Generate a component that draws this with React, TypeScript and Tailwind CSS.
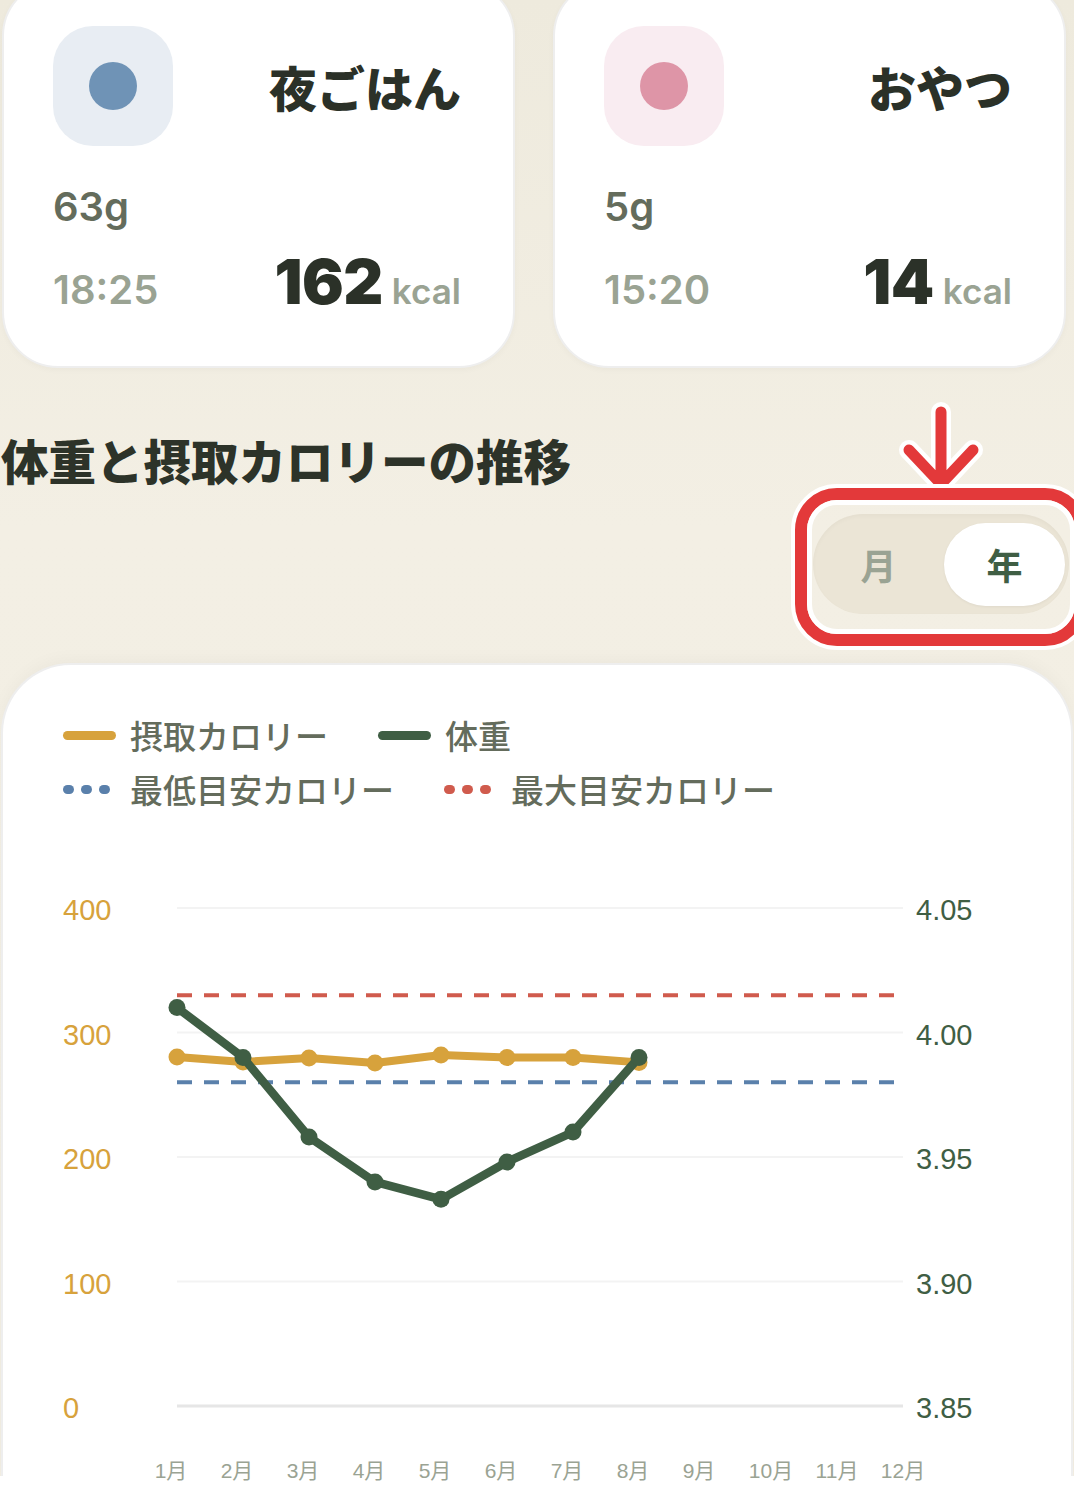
import React from "react";

const jp = "font-['Noto_Sans_CJK_JP',sans-serif]";
const num = "font-['Inter','Noto_Sans_CJK_JP',sans-serif]";

type Meal = {
  title: string;
  grams: string;
  time: string;
  kcal: string;
  tint: string;
  dot: string;
};

const meals: Meal[] = [
  { title: "夜ごはん", grams: "63g", time: "18:25", kcal: "162", tint: "bg-[#e8edf3]", dot: "bg-[#6f93b6]" },
  { title: "おやつ", grams: "5g", time: "15:20", kcal: "14", tint: "bg-[#f9ecf1]", dot: "bg-[#de95a7]" },
];

// chart data (year view)
const months = ["1月", "2月", "3月", "4月", "5月", "6月", "7月", "8月", "9月", "10月", "11月", "12月"];
const calories = [280.3, 276.3, 279.5, 275.5, 282, 280, 280, 276];
const weights = [4.01, 3.99, 3.958, 3.94, 3.933, 3.948, 3.96, 3.99];
const minKcal = 260;
const maxKcal = 330;

const X0 = 177;
const STEP = 66;
const Y0 = 1406;
const PER100 = 124.5;
const xAt = (i: number) => X0 + i * STEP;
const yKcal = (v: number) => Y0 - (v / 100) * PER100;
const yWeight = (w: number) => Y0 - ((w - 3.85) / 0.05) * PER100;

function MealCard({ meal }: { meal: Meal }) {
  return (
    <div className="h-[388px] w-[513px] rounded-[56px] border-2 border-[#eeeeee] bg-white pl-[49px] pr-[52px] pt-[44px] shadow-[0_2px_6px_rgba(0,0,0,0.03)]">
      <div className="flex items-center justify-between">
        <div className={`flex h-[120px] w-[120px] items-center justify-center rounded-[40px] ${meal.tint}`}>
          <div className={`h-[48px] w-[48px] rounded-full ${meal.dot}`} />
        </div>
        <div className={`${jp} text-[48px] font-black leading-[48px] text-[#2b3128]`}>{meal.title}</div>
      </div>
      <div className={`${num} mt-[41px] text-[40px] font-semibold leading-[40px] text-[#646c5c]`}>{meal.grams}</div>
      <div className="mt-[25px] flex items-baseline justify-between">
        <span className={`${num} text-[40px] font-semibold leading-[40px] text-[#9aa393]`}>{meal.time}</span>
        <span className="flex items-baseline gap-[9px]">
          <span className={`${num} text-[62px] font-black leading-[60px] tracking-[-0.5px] text-[#2b3128]`}>{meal.kcal}</span>
          <span className={`${num} text-[35px] font-semibold leading-[40px] text-[#9aa393]`}>kcal</span>
        </span>
      </div>
    </div>
  );
}

function LegendLine({ color, label }: { color: string; label: string }) {
  return (
    <div className="flex items-center gap-[14px]">
      <span className={`h-[9px] w-[53px] rounded-full ${color}`} />
      <span className={`${jp} text-[33px] font-medium leading-[54px] text-[#646c5c]`}>{label}</span>
    </div>
  );
}

function LegendDots({ color, label }: { color: string; label: string }) {
  return (
    <div className="flex items-center gap-[20px]">
      <span className="flex gap-[7px]">
        <span className={`h-[9px] w-[11px] rounded-full ${color}`} />
        <span className={`h-[9px] w-[11px] rounded-full ${color}`} />
        <span className={`h-[9px] w-[11px] rounded-full ${color}`} />
      </span>
      <span className={`${jp} text-[33px] font-medium leading-[54px] text-[#646c5c]`}>{label}</span>
    </div>
  );
}

function Chart() {
  const grid = [0, 100, 200, 300, 400];
  const right = ["3.85", "3.90", "3.95", "4.00", "4.05"];
  const kcalPts = calories.map((v, i) => `${xAt(i)},${yKcal(v)}`).join(" ");
  const wPts = weights.map((w, i) => `${xAt(i)},${yWeight(w)}`).join(" ");
  const labelFont = "'Liberation Sans','Noto Sans CJK JP',sans-serif";

  return (
    <svg width={1068} height={620} viewBox="3 880 1068 620" className="relative z-10 mt-[64px] block">
      {grid.map((g) => (
        <line
          key={g}
          x1={X0}
          x2={903}
          y1={yKcal(g)}
          y2={yKcal(g)}
          stroke={g === 0 ? "#e6e6e6" : "#f3f3f3"}
          strokeWidth={g === 0 ? 3 : 2}
        />
      ))}
      {grid.map((g) => (
        <text key={`l${g}`} x={63} y={yKcal(g) + 12} fontSize={29} fill="#d7a23c" fontFamily={labelFont}>
          {g}
        </text>
      ))}
      {right.map((r, i) => (
        <text key={r} x={916} y={Y0 - i * PER100 + 12} fontSize={29} fill="#3f5e44" fontFamily={labelFont}>
          {r}
        </text>
      ))}

      <line x1={X0} x2={895} y1={yKcal(maxKcal)} y2={yKcal(maxKcal)} stroke="#d05b4d" strokeWidth={4} strokeDasharray="15 12" />
      <line x1={X0} x2={895} y1={yKcal(minKcal)} y2={yKcal(minKcal)} stroke="#5a80ab" strokeWidth={4} strokeDasharray="15 12" />

      <polyline points={kcalPts} fill="none" stroke="#d7a23c" strokeWidth={8} strokeLinejoin="round" />
      {calories.map((v, i) => (
        <circle key={`c${i}`} cx={xAt(i)} cy={yKcal(v)} r={8.5} fill="#d7a23c" />
      ))}
      <polyline points={wPts} fill="none" stroke="#3f5e44" strokeWidth={8.5} strokeLinejoin="round" />
      {weights.map((w, i) => (
        <circle key={`w${i}`} cx={xAt(i)} cy={yWeight(w)} r={8.5} fill="#3f5e44" />
      ))}

      {months.map((m, i) => (
        <text
          key={m}
          x={xAt(i) - (m.length === 2 ? 6 : 0)}
          y={1478}
          fontSize={21}
          fill="#9aa393"
          textAnchor="middle"
          fontFamily={labelFont}
        >
          {m}
        </text>
      ))}
    </svg>
  );
}

function Annotation() {
  return (
    <>
      <svg width={100} height={100} viewBox="890 400 100 100" className="absolute left-[890px] top-[400px]">
        <path d="M941 412 V484 M909 450 L941 484 L973 450" fill="none" stroke="#ffffff" strokeWidth={20} strokeLinecap="round" strokeLinejoin="round" />
        <path d="M941 412 V484 M909 450 L941 484 L973 450" fill="none" stroke="#e3393a" strokeWidth={11} strokeLinecap="round" strokeLinejoin="round" />
      </svg>
      <div className="absolute left-[791px] top-[484px] h-[166px] w-[300px] rounded-[46px] border-[4px] border-white">
        <div className="h-full w-full rounded-[42px] border-[12px] border-[#e3393a]">
          <div className="h-full w-full rounded-[30px] border-[5px] border-white" />
        </div>
      </div>
    </>
  );
}

export default function App() {
  return (
    <div className="relative h-[1510px] w-[1074px] overflow-hidden bg-[linear-gradient(180deg,#eeeadd_0%,#f3efe4_35%,#f2eee3_100%)]">
      <div className="-mt-[20px] flex gap-[38px] pl-[2px]">
        {meals.map((m) => (
          <MealCard key={m.title} meal={m} />
        ))}
      </div>

      <h2 className={`${jp} ml-[1px] mt-[68px] text-[47.5px] font-black leading-[48px] text-[#2d3329]`}>
        体重と摂取カロリーの推移
      </h2>

      <div className="mt-[30px] flex justify-end pr-[5px]">
        <div className="flex h-[100px] w-[256px] items-center rounded-full bg-[#ebe5d6] pr-[4px] shadow-[inset_0_2px_4px_rgba(0,0,0,0.03)]">
          <div className={`${jp} flex-1 text-center text-[36px] font-bold text-[#9aa393]`}>月</div>
          <div className={`${jp} flex h-[83px] w-[121px] items-center justify-center rounded-full bg-white text-[36px] font-bold text-[#3f5e44] shadow-[0_1px_3px_rgba(0,0,0,0.05)]`}>
            年
          </div>
        </div>
      </div>

      <div className="ml-[1px] mt-[49px] h-[813px] w-[1072px] rounded-t-[70px] border-2 border-b-0 border-[#eeeeee] bg-white pl-[60px] pt-[43px] shadow-[0_-4px_16px_rgba(0,0,0,0.03)]">
        <div className="flex gap-x-[50px]">
          <LegendLine color="bg-[#d7a23c]" label="摂取カロリー" />
          <LegendLine color="bg-[#3f5e44]" label="体重" />
        </div>
        <div className="flex gap-x-[50px]">
          <LegendDots color="bg-[#5a80ab]" label="最低目安カロリー" />
          <LegendDots color="bg-[#d05b4d]" label="最大目安カロリー" />
        </div>
        <div className="-ml-[60px]">
          <Chart />
        </div>
      </div>

      <div className="h-[40px] bg-white" />

      <Annotation />
    </div>
  );
}
